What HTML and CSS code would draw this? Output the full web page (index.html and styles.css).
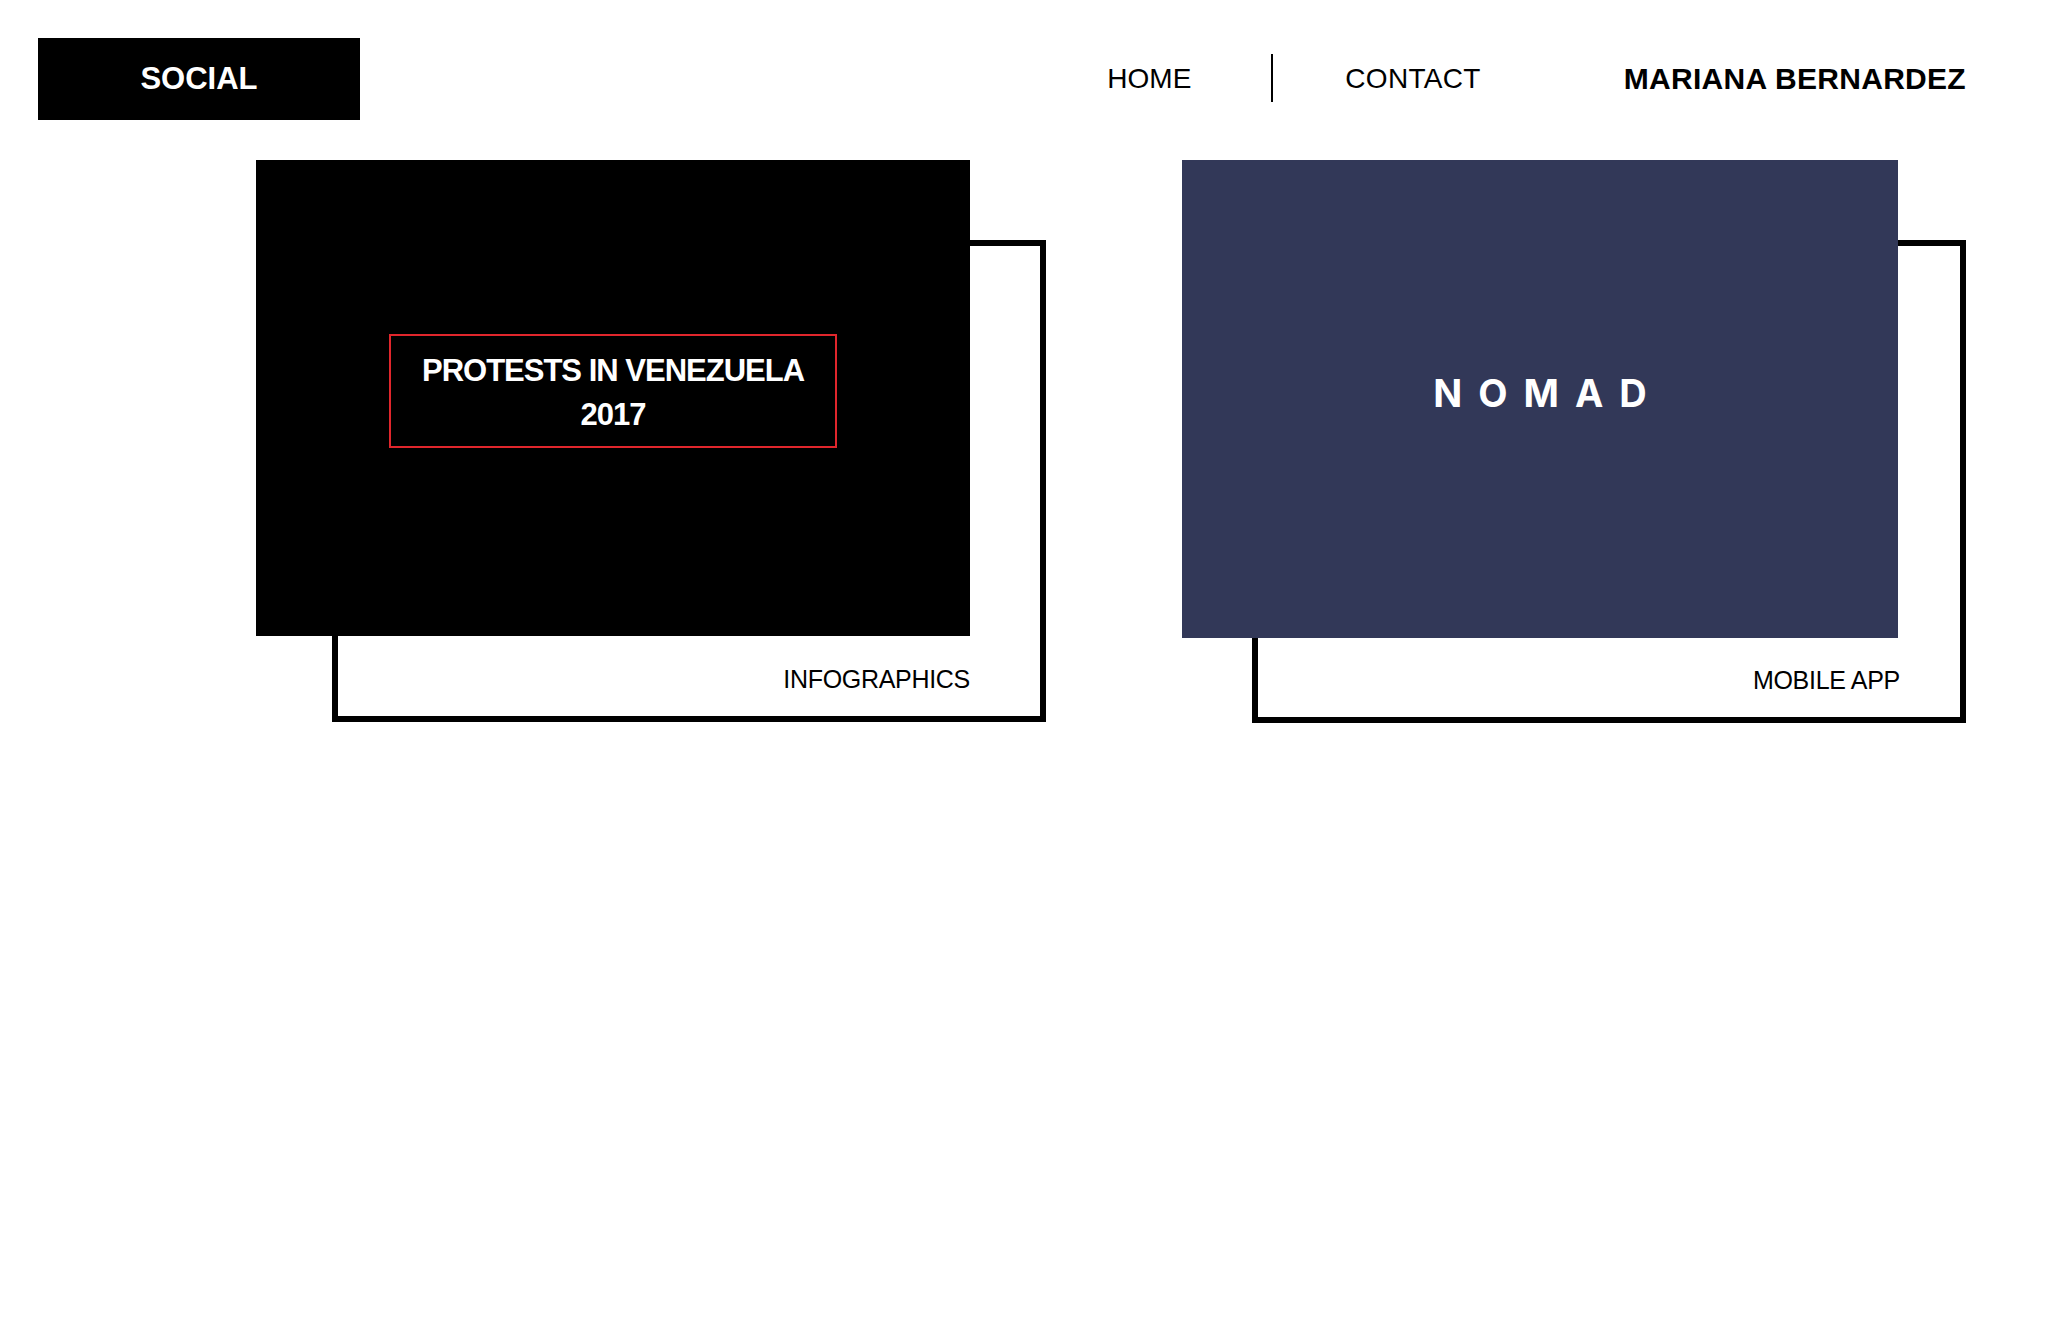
FILE: index.html
```html
<!DOCTYPE html>
<html lang="en">
<head>
<meta charset="utf-8">
<title>Mariana Bernardez</title>
<link rel="stylesheet" href="styles.css">
</head>
<body>
<header class="header">
  <div class="brand">SOCIAL</div>
  <nav class="nav">
    <a class="nav-link" href="#">HOME</a>
    <span class="nav-sep"></span>
    <a class="nav-link nav-contact" href="#">CONTACT</a>
    <span class="nav-name">MARIANA BERNARDEZ</span>
  </nav>
</header>
<main class="projects">
  <article class="card card--infographic">
    <div class="card-frame"></div>
    <div class="card-cover cover-black">
      <div class="cover-title">PROTESTS IN VENEZUELA<br>2017</div>
    </div>
    <div class="card-label">INFOGRAPHICS</div>
  </article>
  <article class="card card--nomad">
    <div class="card-frame"></div>
    <div class="card-cover cover-navy">
      <div class="nomad">NOMAD</div>
    </div>
    <div class="card-label">MOBILE APP</div>
  </article>
</main>
</body>
</html>
```

FILE: styles.css
```css
html, body {
  margin: 0;
  padding: 0;
  background: #ffffff;
}

body {
  font-family: "Liberation Sans", Arial, sans-serif;
  color: #000;
  width: 2046px;
  min-height: 1342px;
}

.header {
  display: flex;
  align-items: center;
  padding: 38px 80px 0 38px;
  height: 82px;
}

.brand {
  width: 322px;
  height: 82px;
  background: #000;
  color: #fff;
  font-weight: 700;
  font-size: 31px;
  display: flex;
  align-items: center;
  justify-content: center;
}

.nav {
  margin-left: auto;
  display: flex;
  align-items: center;
}

.nav-link {
  color: #000;
  text-decoration: none;
  font-size: 28px;
  line-height: 1;
}

.nav-contact {
  letter-spacing: 0.3px;
}

.nav-sep {
  width: 2px;
  height: 48px;
  background: #000;
  margin: -2px 72px 0 80px;
}

.nav-name {
  margin-left: 143px;
  font-size: 30px;
  font-weight: 700;
  letter-spacing: 0.3px;
  line-height: 1;
}

.projects {
  display: flex;
  align-items: flex-start;
  gap: 136px;
  margin-top: 40px;
  padding-left: 256px;
}

.card {
  display: grid;
  grid-template-columns: 76px 638px 76px;
  grid-template-rows: 80px 396px 86px;
}

.card--nomad {
  grid-template-columns: 70px 646px 68px;
  grid-template-rows: 80px 398px 85px;
}

.card-frame {
  grid-column: 2 / 4;
  grid-row: 2 / 4;
  border: 6px solid #000;
}

.card-cover {
  grid-column: 1 / 3;
  grid-row: 1 / 3;
  display: flex;
  align-items: center;
  justify-content: center;
  box-sizing: border-box;
}

.cover-black {
  background: #000;
  padding-bottom: 14px;
}

.cover-navy {
  background: #323858;
  padding-bottom: 12px;
}

.cover-title {
  box-sizing: border-box;
  width: 448px;
  height: 114px;
  border: 2px solid #e0262c;
  color: #fff;
  font-weight: 700;
  font-size: 31px;
  letter-spacing: -1px;
  line-height: 44px;
  text-align: center;
  padding-top: 13px;
}

.nomad {
  color: #fff;
  font-family: "Inter", "Liberation Sans", sans-serif;
  font-weight: 700;
  font-size: 38px;
  letter-spacing: 16px;
  margin-right: -16px;
  line-height: 1;
}

.card-label {
  grid-column: 1 / 3;
  grid-row: 3;
  justify-self: end;
  align-self: center;
  font-size: 25px;
  letter-spacing: -0.3px;
  line-height: 1;
}

.card--nomad .card-label {
  margin-right: -2px;
}
```
